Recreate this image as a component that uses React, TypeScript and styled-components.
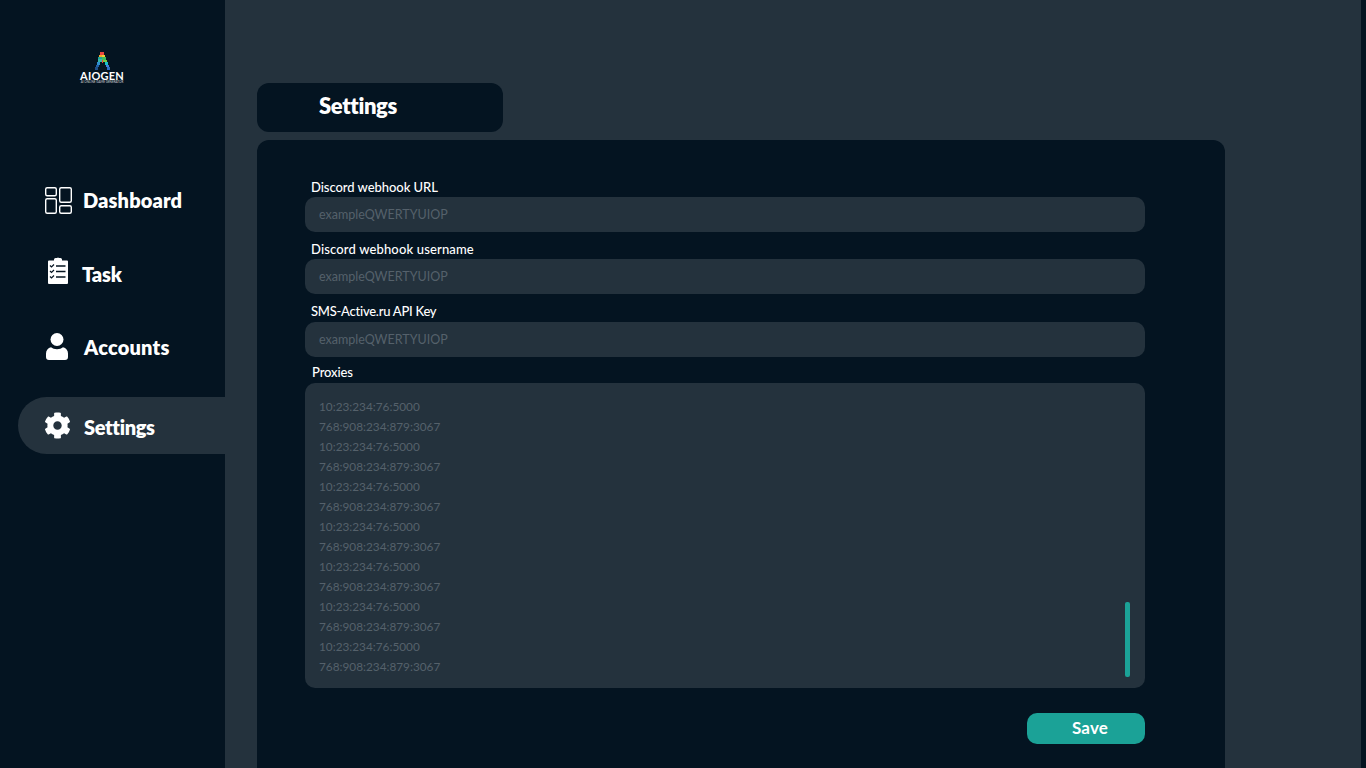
import React from "react";
import styled, { createGlobalStyle } from "styled-components";
import { FaCog } from "react-icons/fa";

const dark = "#041421";
const slate = "#24323d";
const teal = "#1ba297";

const Global = createGlobalStyle`
  html, body { margin: 0; padding: 0; height: 100%; overflow: hidden; background: ${slate}; }
  * { box-sizing: border-box; }
`;

const Shell = styled.div`
  display: flex;
  height: 768px;
  overflow: hidden;
  font-family: Lato, "Liberation Sans", sans-serif;
  color: #fff;
`;

const Sidebar = styled.aside`
  flex: 0 0 225px;
  background: ${dark};
  display: flex;
  flex-direction: column;
`;

const LogoBlock = styled.div`
  height: 171px;
  padding-top: 52px;
  display: flex;
  flex-direction: column;
  align-items: center;
  padding-right: 21px;
`;

const LogoName = styled.span`
  font-size: 11px;
  line-height: 9px;
  font-weight: 700;
  letter-spacing: 0.2px;
  margin-top: 1px;
`;

const LogoTag = styled.span`
  font-size: 3px;
  line-height: 4px;
  white-space: nowrap;
  color: #d5d9dc;
`;

const NavList = styled.nav`
  display: flex;
  flex-direction: column;
  padding-left: 18px;
`;

const NavItem = styled.a<{ $active?: boolean; $top: number; $gap: number; $track: number }>`
  display: flex;
  align-items: center;
  height: 57px;
  margin-top: ${(p) => p.$top}px;
  padding-left: 26px;
  gap: ${(p) => p.$gap}px;
  font-size: 20px;
  font-weight: 800;
  letter-spacing: ${(p) => p.$track}px;
  border-radius: 29px 0 0 29px;
  background: ${(p) => (p.$active ? slate : "transparent")};
`;

const NavText = styled.span<{ $drop?: number }>`
  position: relative;
  top: ${(p) => p.$drop ?? 0}px;
`;

const IconSlot = styled.span<{ $lift?: number; $left?: number }>`
  flex: 0 0 28px;
  display: flex;
  justify-content: center;
  margin-bottom: ${(p) => p.$lift ?? 0}px;
  padding-right: ${(p) => p.$left ?? 0}px;
`;

const Main = styled.main`
  flex: 1;
  padding: 83px 0 0 32px;
  display: flex;
  flex-direction: column;
  gap: 8px;
  min-width: 0;
`;

const TitleCard = styled.div`
  width: 246px;
  height: 49px;
  flex: none;
  background: ${dark};
  border-radius: 12px;
  padding: 0 0 4px 62px;
  display: flex;
  align-items: center;
  font-size: 22px;
  font-weight: 800;
  letter-spacing: -0.35px;
`;

const Panel = styled.section`
  width: 968px;
  flex: 1;
  background: ${dark};
  border-radius: 12px 12px 0 0;
  padding: 38px 80px 0 48px;
  display: flex;
  flex-direction: column;
`;

const Field = styled.div<{ $top?: number }>`
  display: flex;
  flex-direction: column;
  margin-top: ${(p) => p.$top ?? 0}px;
`;

const Label = styled.label<{ $indent: number; $track: number; $line: number }>`
  height: 19px;
  line-height: ${(p) => p.$line}px;
  padding-left: ${(p) => p.$indent}px;
  font-size: 13px;
  font-weight: 500;
  letter-spacing: ${(p) => p.$track}px;
`;

const Input = styled.div`
  height: 35px;
  background: ${slate};
  border-radius: 10px;
  padding: 0 0 1px 14px;
  display: flex;
  align-items: center;
  font-size: 12.5px;
  color: #55616b;
`;

const ProxyBox = styled.div`
  position: relative;
  height: 305px;
  background: ${slate};
  border-radius: 10px;
  padding: 14px 14px 0;
  font-size: 11.8px;
  line-height: 20px;
  color: #55616b;
`;

const Thumb = styled.span`
  position: absolute;
  left: 820px;
  top: 219px;
  width: 5px;
  height: 75px;
  background: ${teal};
  border-radius: 2px;
`;

const Actions = styled.div`
  display: flex;
  justify-content: flex-end;
  margin-top: 25px;
`;

const SaveButton = styled.button`
  width: 118px;
  height: 31px;
  border: 0;
  border-radius: 10px;
  background: ${teal};
  color: #fff;
  font-family: inherit;
  font-size: 17px;
  font-weight: 700;
  letter-spacing: 0.2px;
  padding: 0 0 2px 8px;
`;

const ScrollStrip = styled.div`
  flex: 0 0 5px;
  background: ${dark};
`;

const Content = styled.div`
  flex: 1;
  display: flex;
  min-width: 0;
`;

const DashIcon = () => (
  <svg width="28" height="28" viewBox="0 0 28 28" fill="none" stroke="#fff" strokeWidth="1.4">
    <rect x="1.7" y="1.7" width="10.6" height="8" rx="1.5" />
    <rect x="1.7" y="12.7" width="10.6" height="14.6" rx="1.5" />
    <rect x="15.7" y="1.7" width="11.6" height="14.6" rx="1.5" />
    <rect x="15.7" y="19.7" width="11.6" height="7.6" rx="1.5" />
  </svg>
);

const TaskIcon = () => (
  <svg width="20" height="27" viewBox="0 0 20 27">
    <path fill="#fff" d="M1 3.5h5V2.5A1.5 1.5 0 0 1 7.500 1h1.500a1.500 1.500 0 0 1 2 0h1.500A1.500 1.500 0 0 1 14 2.500v1h5a1 1 0 0 1 1 1V26a1 1 0 0 1-1 1H1a1 1 0 0 1-1-1V4.500a1 1 0 0 1 1-1z" />
    <g fill="none" stroke={dark} strokeWidth="1.2">
      <path d="M2 8.500l1.500 1.500 2.500-2.500M2 14l1.500 1.500L6 13M2 19.500L3.500 21 6 18.500" />
      <path strokeWidth="1.500" d="M8 9h9.500M8 14.500h9.500M8 20h9.500" />
    </g>
  </svg>
);

const UserIcon = () => (
  <svg width="22" height="27" viewBox="0 0 22 27" fill="#fff">
    <circle cx="11" cy="6.500" r="6.500" />
    <path d="M5 14.200c1.500 1.300 3.500 2 6 2s4.500-.7 6-2c3 .6 5 3 5 6.300V24a3 3 0 0 1-3 3H3a3 3 0 0 1-3-3v-3.500c0-3.300 2-5.700 5-6.300z" />
  </svg>
);

const LogoMark = () => (
  <svg width="15" height="18" viewBox="0 0 15 18" shapeRendering="crispEdges">
    <path fill="#e8473f" d="M5 0h4v3H5z" />
    <path fill="#f4a62a" d="M4 3h3v2H4z" />
    <path fill="#e8d13a" d="M7 3h3v2H7z" />
    <path fill="#3dbb5a" d="M7 5h4v3H7z" />
    <path fill="#1ba297" d="M3 5h4v2H3z" />
    <path fill="#37b6a8" d="M3 7h4v3H3z" />
    <path fill="#7ac943" d="M8 8h4v2H8z" />
    <path fill="#2f8fd0" d="M2 10h3v3H2z" />
    <path fill="#18c0c9" d="M10 10h3v3h-3z" />
    <path fill="#e8473f" d="M7 8h1v3H7z" />
    <path fill="#1f5fa8" d="M1 13h3v2H1z" />
    <path fill="#3f7de0" d="M11 13h3v2h-3z" />
    <path fill="#1f4f88" d="M0 15h3v3H0z" />
    <path fill="#2a6cc0" d="M12 15h3v3h-3z" />
  </svg>
);

const proxies = Array.from({ length: 14 }, (_, i) =>
  i % 2 === 0 ? "10:23:234:76:5000" : "768:908:234:879:3067"
);

const fields = [
  { label: "Discord webhook URL", top: 0, track: -0.05, line: 19 },
  { label: "Discord webhook username", top: 8, track: 0.15, line: 19 },
  { label: "SMS-Active.ru API Key", top: 9, track: -0.25, line: 17 },
];

export default function App() {
  return (
    <Shell>
      <Global />
      <Sidebar>
        <LogoBlock>
          <LogoMark />
          <LogoName>AIOGEN</LogoName>
          <LogoTag>AI ONLINE GAME GENERATOR</LogoTag>
        </LogoBlock>
        <NavList>
          <NavItem $top={0} $gap={11} $track={0.12}>
            <IconSlot><DashIcon /></IconSlot>
            Dashboard
          </NavItem>
          <NavItem $top={17} $gap={10} $track={-0.2}>
            <IconSlot $lift={6}><TaskIcon /></IconSlot>
            Task
          </NavItem>
          <NavItem $top={16} $gap={12} $track={0.2}>
            <IconSlot $left={2}><UserIcon /></IconSlot>
            Accounts
          </NavItem>
          <NavItem $top={22} $gap={12} $track={-0.35} $active>
            <IconSlot $left={1}><FaCog size={27} color="#fff" /></IconSlot>
            <NavText $drop={1}>Settings</NavText>
          </NavItem>
        </NavList>
      </Sidebar>
      <Content>
        <Main>
          <TitleCard>Settings</TitleCard>
          <Panel>
            {fields.map((f) => (
              <Field key={f.label} $top={f.top}>
                <Label $indent={6} $track={f.track} $line={f.line}>{f.label}</Label>
                <Input>exampleQWERTYUIOP</Input>
              </Field>
            ))}
            <Field $top={7}>
              <Label $indent={7} $track={-0.1} $line={17}>Proxies</Label>
              <ProxyBox>
                {proxies.map((p, i) => (
                  <div key={i}>{p}</div>
                ))}
                <Thumb />
              </ProxyBox>
            </Field>
            <Actions>
              <SaveButton>Save</SaveButton>
            </Actions>
          </Panel>
        </Main>
        <ScrollStrip />
      </Content>
    </Shell>
  );
}
